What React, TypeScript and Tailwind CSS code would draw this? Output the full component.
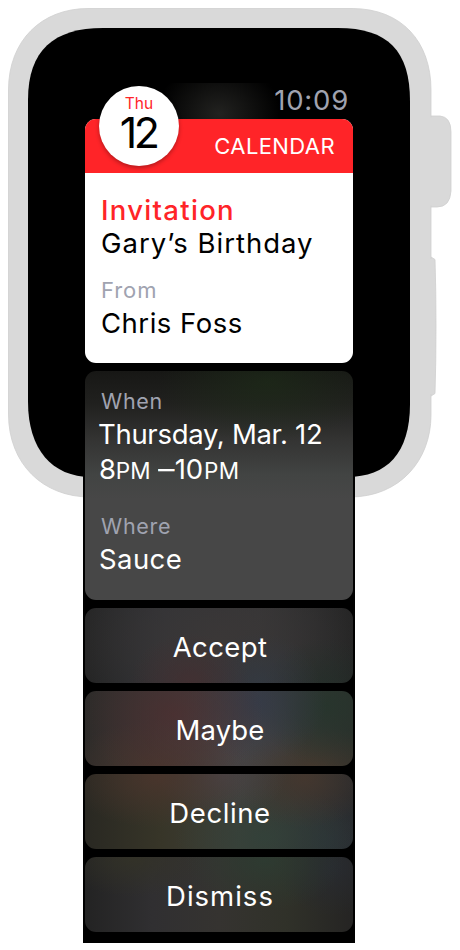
import React from "react";

const fontStack = "font-['Inter','Roboto','Liberation_Sans',sans-serif]";

function WatchCase() {
  return (
    <svg className="col-start-1 row-start-1" width="460" height="950" viewBox="0 0 460 950" aria-hidden="true">
      <g fill="#d9d9d9" stroke="#cfcfcf" strokeWidth="0.8">
        <path d="M428 116H440Q451 117 451 132V191Q450 207 437 207H428Z" />
        <path d="M428 257H431L435 259.500Q436 290 436 326T435 393.500L431 396H428Z" />
        <path d="M88 8.500H352C402 8.500 431 42 431 90V415C431 460 400 497 350 497H90C43 497 8.500 464 8.500 414V90C8.500 40 42 8.500 88 8.500Z" />
      </g>
      <path d="M428 117.500H432V205.500H428ZM428 259H432V394H428Z" fill="#d9d9d9" />
      <path
        d="M103 28H338C388 28 410 51 410 101V404C410 453 387 477 347 477H91C52 477 28 449 28 402V100C28 50 54 28 103 28Z"
        fill="#000"
      />
    </svg>
  );
}

function DateBadge() {
  return (
    <div className="absolute left-[14px] top-[-33px] flex h-20 w-20 flex-col items-center rounded-full bg-white shadow-[0_2px_4px_rgba(0,0,0,0.3)]">
      <span className="mt-[8px] text-[15.500px] leading-[19px] text-[#ff2428]">Thu</span>
      <span className="mr-[2px] mt-[1px] text-[43px] leading-[36px] tracking-[-3.5px] text-black">12</span>
    </div>
  );
}

function Invitation() {
  return (
    <section className="relative h-[244px] rounded-[11px] bg-white">
      <header className="flex h-[54px] items-center justify-end rounded-t-[11px] bg-[#ff2428] pr-[18px] text-[22px] tracking-[0.4px] text-white">
        CALENDAR
      </header>
      <DateBadge />
      <div className="flex flex-col items-start whitespace-nowrap pl-4 pt-[21px] text-[27.500px] leading-[33px] text-black">
        <span className="font-medium tracking-[1.3px] text-[#ff2428]">Invitation</span>
        <span className="tracking-[1px]">Gary’s Birthday</span>
        <span className="mt-[17px] text-[22px] leading-[26px] tracking-[0.9px] text-[#a0a3b0]">From</span>
        <span className="mt-1 tracking-[0.5px]">Chris Foss</span>
      </div>
    </section>
  );
}

function Details() {
  return (
    <section className="flex h-[229px] flex-col items-start whitespace-nowrap rounded-[11px] bg-[radial-gradient(ellipse_110px_60px_at_68%_5%,rgba(30,46,24,0.6),transparent),linear-gradient(#171715_0px,#21211f_34px,#343433_70px,#424443_104px,#474747_128px,#474747_100%)] pl-[14px] pt-[17px] text-[27.500px] leading-[35px] text-white">
      <span className="ml-[2px] text-[21.500px] leading-[26px] tracking-[0.7px] text-[#a0a3b0]">When</span>
      <span className="ml-[-1px] mt-[3px] tracking-[-0.3px]">Thursday, Mar. 12</span>
      <span className="tracking-[-0.2px]">
        8<span className="text-[22.500px] tracking-[0.1px]">PM</span>{" "}
        <span className="mr-[3px] inline-block origin-left scale-x-[1.2]">–</span>10
        <span className="ml-[1px] text-[22.500px] tracking-[0.3px]">PM</span>
      </span>
      <span className="ml-[2px] mt-[25px] text-[21.500px] leading-[26px] tracking-[0.7px] text-[#a0a3b0]">Where</span>
      <span className="mt-[3px] tracking-[0.4px]">Sauce</span>
    </section>
  );
}

const actions = [
  {
    label: "Accept",
    spacing: "tracking-[0.4px]",
    glow: "bg-[radial-gradient(ellipse_60px_50px_at_39%_100%,rgba(75,44,46,0.55),transparent),radial-gradient(ellipse_60px_50px_at_65%_100%,rgba(50,58,68,0.7),transparent),radial-gradient(ellipse_60px_45px_at_90%_100%,rgba(36,48,42,0.7),transparent),radial-gradient(ellipse_150px_80px_at_50%_40%,#3a3737,transparent),linear-gradient(90deg,#252525,#313236_30%,#353536_65%,#242424)]",
  },
  {
    label: "Maybe",
    spacing: "tracking-[0.1px]",
    glow: "bg-[radial-gradient(ellipse_90px_70px_at_33%_32%,rgba(77,46,47,0.75),transparent),radial-gradient(ellipse_70px_60px_at_64%_15%,rgba(52,58,72,0.85),transparent),radial-gradient(ellipse_70px_60px_at_90%_20%,rgba(38,53,44,0.85),transparent),radial-gradient(ellipse_90px_45px_at_27%_100%,rgba(74,54,44,0.8),transparent),radial-gradient(ellipse_75px_40px_at_85%_100%,rgba(70,56,44,0.8),transparent),radial-gradient(ellipse_80px_70px_at_53%_80%,#474547,transparent),linear-gradient(90deg,#2d2b29,#3e3939_35%,#40403f_65%,#2b2f2b)]",
  },
  {
    label: "Decline",
    spacing: "tracking-[0.6px]",
    glow: "bg-[radial-gradient(ellipse_90px_50px_at_27%_5%,rgba(75,53,45,0.85),transparent),radial-gradient(ellipse_65px_45px_at_51%_0%,rgba(73,68,72,0.9),transparent),radial-gradient(ellipse_70px_50px_at_82%_5%,rgba(72,56,46,0.8),transparent),radial-gradient(ellipse_90px_55px_at_67%_85%,rgba(50,66,58,0.85),transparent),radial-gradient(ellipse_60px_50px_at_90%_90%,rgba(42,50,56,0.8),transparent),linear-gradient(90deg,#292822,#373528_28%,#3e3f38_58%,#292a2c)]",
  },
  {
    label: "Dismiss",
    spacing: "tracking-[1px]",
    glow: "bg-[radial-gradient(ellipse_80px_50px_at_67%_5%,rgba(45,60,50,0.85),transparent),radial-gradient(ellipse_75px_40px_at_18%_0%,rgba(52,51,38,0.8),transparent),radial-gradient(ellipse_55px_50px_at_92%_12%,rgba(40,43,49,0.9),transparent),linear-gradient(90deg,#232323,#302f31_25%,#353330_50%,#303129_75%,#252423)]",
  },
];

export default function App() {
  return (
    <main className={`grid h-[950px] w-[460px] overflow-hidden bg-white ${fontStack}`}>
      <WatchCase />
      <div className="relative col-start-1 row-start-1 ml-[83px] mt-[83px] flex h-[860px] w-[272px] flex-col gap-2 bg-black px-[2px]">
        <div className="-mb-2 flex h-9 shrink-0 justify-end bg-[radial-gradient(ellipse_62px_52px_at_50%_85%,#222220,transparent)] pr-1 text-[27.500px] leading-[34px] tracking-[0.8px] text-[#a0a3b0]">
          10:09
        </div>
        <Invitation />
        <Details />
        {actions.map(({ label, spacing, glow }) => (
          <button
            key={label}
            className={`flex h-[75px] shrink-0 items-center justify-center rounded-[11px] pl-[2px] pt-1 text-[27.500px] text-white ${spacing} ${glow}`}
          >
            {label}
          </button>
        ))}
      </div>
    </main>
  );
}
